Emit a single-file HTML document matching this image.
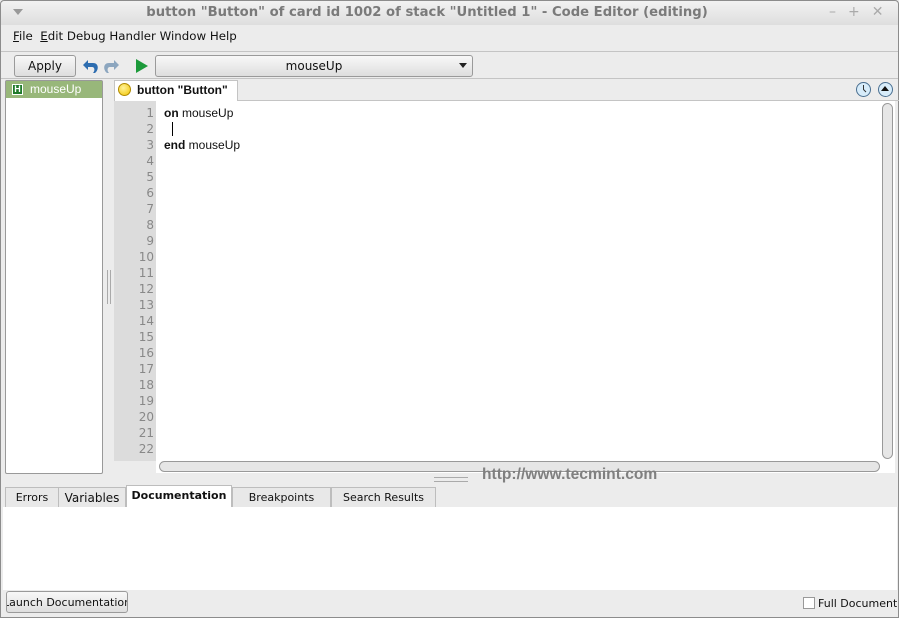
<!DOCTYPE html>
<html><head><meta charset="utf-8"><style>
*{margin:0;padding:0;box-sizing:border-box}
body{width:899px;height:618px;background:#ececec;font-family:"DejaVu Sans","Liberation Sans",sans-serif;font-size:11px;color:#111;position:relative;overflow:hidden}
.a{position:absolute}
.btn{position:absolute;border:1px solid #9a9a9a;border-radius:3px;background:linear-gradient(#f8f8f8,#dedede);text-align:center}
.ln{position:absolute;left:114px;width:40px;text-align:right;color:#888;font-size:12px}
.tab{position:absolute;top:487px;height:20px;border:1px solid #bdbdbd;border-bottom:none;background:#e8e8e8;text-align:center;line-height:20px;font-size:11px}
</style></head><body>
<div class="a" style="left:0;top:0;width:899px;height:618px;border:1px solid #8c8c8c;border-radius:4px 4px 0 0"></div>
<div class="a" style="left:1px;top:1px;width:897px;height:24px;background:linear-gradient(#f2f2f2,#dedede);border-radius:4px 4px 0 0"></div>
<div class="a" style="left:13px;top:9px;width:0;height:0;border-left:5px solid transparent;border-right:5px solid transparent;border-top:6px solid #999"></div>
<div class="a" style="left:0;top:5px;width:854px;text-align:center;font-weight:bold;font-size:13.2px;color:#7a7a7a">button "Button" of card id 1002 of stack "Untitled 1" - Code Editor (editing)</div>
<div class="a" style="left:829px;top:4px;font-size:14px;color:#aaa;letter-spacing:12px">–+✕</div>
<div class="a" style="left:13px;top:29px;font-size:11.8px"><u>F</u>ile&nbsp; <u>E</u>dit Debug Handler Window Help</div>
<div class="a" style="left:1px;top:51px;width:897px;height:1px;background:#c4c4c4"></div>
<div class="btn" style="left:14px;top:55px;width:62px;height:22px;line-height:20px;font-size:12px">Apply</div>
<svg class="a" style="left:82px;top:56px" width="70" height="20">
<path d="M13 17 C17 14 17 7 11 7 L6 7 L6 4 L1 9 L6 14 L6 11 L10 11 C13 11 13 15 11 17Z" fill="#2d6db0"/>
<path d="M25 17 C21 14 21 7 27 7 L32 7 L32 4 L37 9 L32 14 L32 11 L28 11 C25 11 25 15 27 17Z" fill="#8ca6bf"/>
<path d="M54 3 L66 10 L54 17Z" fill="#1c9a3a"/>
</svg>
<div class="btn" style="left:155px;top:55px;width:318px;height:22px;line-height:20px;font-size:12px">mouseUp</div>
<div class="a" style="left:459px;top:63px;border-left:4px solid transparent;border-right:4px solid transparent;border-top:5px solid #222"></div>
<div class="a" style="left:1px;top:78px;width:897px;height:1px;background:#c4c4c4"></div>
<div class="a" style="left:5px;top:80px;width:98px;height:394px;background:#fff;border:1px solid #999;border-radius:2px"></div>
<div class="a" style="left:6px;top:81px;width:96px;height:17px;background:#98b77a"></div>
<div class="a" style="left:12px;top:84px;width:11px;height:11px;background:#1f7a2a;border:1px solid #fff;color:#fff;font-size:9px;font-weight:bold;line-height:9px;text-align:center;font-family:'Liberation Sans',sans-serif">H</div>
<div class="a" style="left:30px;top:82px;color:#fff;font-size:12px;font-family:'Liberation Sans',sans-serif">mouseUp</div>
<div class="a" style="left:107px;top:270px;width:4px;height:34px;border-left:1px solid #aaa;border-right:1px solid #aaa"></div>
<div class="a" style="left:114px;top:79px;width:785px;height:22px;border-bottom:1px solid #c4c4c4"></div>
<div class="a" style="left:114px;top:80px;width:124px;height:21px;background:#fff;border:1px solid #c4c4c4;border-bottom:none"></div>
<div class="a" style="left:118px;top:83px;width:13px;height:13px;border-radius:50%;background:radial-gradient(circle at 40% 35%,#fff39a,#f2c400);border:1px solid #b08a00"></div>
<div class="a" style="left:137px;top:83px;font-weight:bold;font-size:12px;font-family:'Liberation Sans',sans-serif">button "Button"</div>
<div class="a" style="left:856px;top:82px;width:15px;height:15px;border-radius:50%;border:1px solid #4a6f90;background:#d7ecfa"></div>
<svg class="a" style="left:856px;top:82px" width="15" height="15"><path d="M7.5 3V7.5L10 10" stroke="#333" fill="none"/></svg>
<div class="a" style="left:878px;top:82px;width:15px;height:15px;border-radius:50%;border:1px solid #4a6f90;background:#d7ecfa"></div>
<div class="a" style="left:881px;top:86px;border-left:4.5px solid transparent;border-right:4.5px solid transparent;border-bottom:5px solid #111"></div>
<div class="a" style="left:114px;top:101px;width:42px;height:360px;background:#dcdcdc"></div>
<div class="a" style="left:156px;top:101px;width:725px;height:360px;background:#fff"></div>
<div class="a" style="left:881px;top:101px;width:14px;height:360px;background:#fff"></div>
<div class="a" style="left:882px;top:103px;width:11px;height:356px;border:1px solid #999;border-radius:6px;background:#e6e6e6"></div>
<div class="a" style="left:156px;top:461px;width:739px;height:12px;background:#fff"></div>
<div class="a" style="left:159px;top:461px;width:721px;height:11px;border:1px solid #999;border-radius:6px;background:#e6e6e6"></div>
<div class="ln" style="top:106px">1</div><div class="ln" style="top:122px">2</div><div class="ln" style="top:138px">3</div><div class="ln" style="top:154px">4</div><div class="ln" style="top:170px">5</div><div class="ln" style="top:186px">6</div><div class="ln" style="top:202px">7</div><div class="ln" style="top:218px">8</div><div class="ln" style="top:234px">9</div><div class="ln" style="top:250px">10</div><div class="ln" style="top:266px">11</div><div class="ln" style="top:282px">12</div><div class="ln" style="top:298px">13</div><div class="ln" style="top:314px">14</div><div class="ln" style="top:330px">15</div><div class="ln" style="top:346px">16</div><div class="ln" style="top:362px">17</div><div class="ln" style="top:378px">18</div><div class="ln" style="top:394px">19</div><div class="ln" style="top:410px">20</div><div class="ln" style="top:426px">21</div><div class="ln" style="top:442px">22</div>
<div class="a" style="left:164px;top:106px;font-family:'Liberation Sans',sans-serif;font-size:12px"><b>on</b> mouseUp</div>
<div class="a" style="left:172px;top:122px;width:1px;height:14px;background:#000"></div>
<div class="a" style="left:164px;top:138px;font-family:'Liberation Sans',sans-serif;font-size:12px"><b>end</b> mouseUp</div>
<div class="a" style="left:434px;top:477px;width:34px;height:5px;border-top:1px solid #aaa;border-bottom:1px solid #aaa"></div>
<div class="a" style="left:482px;top:466px;font-family:'Liberation Sans',sans-serif;font-weight:bold;font-size:15.6px;color:#808080">http://www.tecmint.com</div>
<div class="tab" style="left:5px;width:54px">Errors</div>
<div class="tab" style="left:58px;width:68px;font-size:12px">Variables</div>
<div class="tab" style="left:126px;width:106px;top:485px;height:23px;background:#fff;font-weight:bold">Documentation</div>
<div class="tab" style="left:232px;width:99px">Breakpoints</div>
<div class="tab" style="left:331px;width:105px">Search Results</div>
<div class="a" style="left:3px;top:507px;width:894px;height:83px;background:#fff"></div>
<div class="btn" style="left:6px;top:591px;width:122px;height:22px;line-height:21px;font-size:11px;overflow:hidden;white-space:nowrap;text-indent:-4px">Launch Documentation</div>
<div class="a" style="left:803px;top:597px;width:12px;height:12px;border:1px solid #999;background:#fff"></div>
<div class="a" style="left:818px;top:597px;font-size:11px;white-space:nowrap;width:79px;overflow:hidden">Full Document</div>
</body></html>
